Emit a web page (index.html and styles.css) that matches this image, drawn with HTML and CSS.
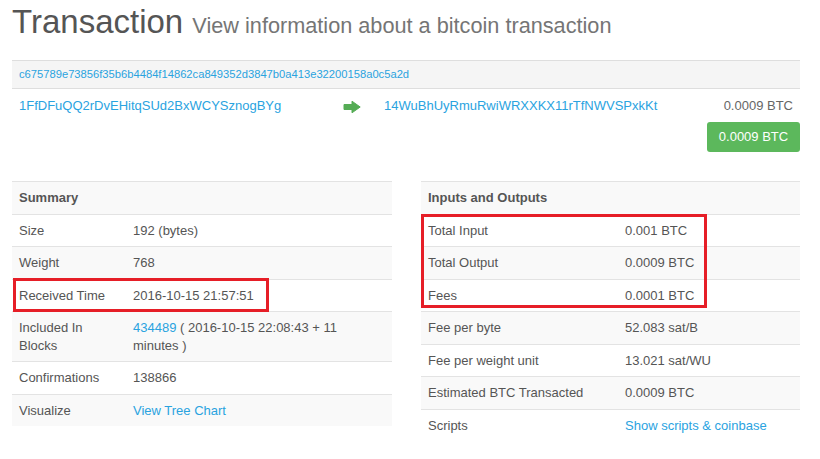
FILE: index.html
```html
<!DOCTYPE html>
<html>
<head>
<meta charset="utf-8">
<link rel="stylesheet" href="styles.css">
</head>
<body>
<div class="page">
  <h1 class="title">Transaction <small class="subtitle">View information about a bitcoin transaction</small></h1>

  <div class="tx-hash"><a href="#">c675789e73856f35b6b4484f14862ca849352d3847b0a413e32200158a0c5a2d</a></div>

  <div class="tx-io">
    <div class="tx-from"><a href="#">1FfDFuQQ2rDvEHitqSUd2BxWCYSznogBYg</a></div>
    <div class="tx-arrow">
      <svg width="18" height="14" viewBox="0 0 18 14"><path d="M1 4.5 H9 V1.2 L17.2 7 L9 12.8 V9.5 H1 Z" fill="#55ac55" stroke="#55ac55" stroke-width="1" stroke-linejoin="round"/></svg>
    </div>
    <div class="tx-to"><a href="#">14WuBhUyRmuRwiWRXXKX11rTfNWVSPxkKt</a></div>
    <div class="tx-amount">0.0009 BTC</div>
  </div>
  <div class="tx-total"><span class="btn-total">0.0009 BTC</span></div>

  <div class="tables">
    <div class="table table-left">
      <div class="row head"><div class="cell">Summary</div></div>
      <div class="row"><div class="cell label">Size</div><div class="cell value">192 (bytes)</div></div>
      <div class="row"><div class="cell label">Weight</div><div class="cell value">768</div></div>
      <div class="row"><div class="cell label">Received Time</div><div class="cell value">2016-10-15 21:57:51</div></div>
      <div class="row"><div class="cell label">Included In Blocks</div><div class="cell value"><a href="#">434489</a> ( 2016-10-15 22:08:43 + 11 minutes )</div></div>
      <div class="row"><div class="cell label">Confirmations</div><div class="cell value">138866</div></div>
      <div class="row"><div class="cell label">Visualize</div><div class="cell value"><a href="#">View Tree Chart</a></div></div>
      <div class="mark mark-left"></div>
    </div>
    <div class="table table-right">
      <div class="row head"><div class="cell">Inputs and Outputs</div></div>
      <div class="row"><div class="cell label">Total Input</div><div class="cell value">0.001 BTC</div></div>
      <div class="row"><div class="cell label">Total Output</div><div class="cell value">0.0009 BTC</div></div>
      <div class="row"><div class="cell label">Fees</div><div class="cell value">0.0001 BTC</div></div>
      <div class="row"><div class="cell label">Fee per byte</div><div class="cell value">52.083 sat/B</div></div>
      <div class="row"><div class="cell label">Fee per weight unit</div><div class="cell value">13.021 sat/WU</div></div>
      <div class="row"><div class="cell label">Estimated BTC Transacted</div><div class="cell value">0.0009 BTC</div></div>
      <div class="row"><div class="cell label">Scripts</div><div class="cell value"><a href="#">Show scripts &amp; coinbase</a></div></div>
      <div class="mark mark-right"></div>
    </div>
  </div>
</div>
</body>
</html>
```

FILE: styles.css
```css
* { box-sizing: border-box; }
html, body { margin: 0; padding: 0; background: #fff; }
body {
  font-family: "Liberation Sans", Arial, Helvetica, sans-serif;
  font-size: 13px;
  color: #555;
}
a { color: #2aa3df; text-decoration: none; }

.page { width: 820px; padding: 0 20px 0 12px; }

.title {
  margin: 4px 0 0;
  height: 36px;
  font-size: 33px;
  font-weight: normal;
  line-height: 36px;
  color: #555;
  white-space: nowrap;
}
.subtitle { font-size: 21.7px; line-height: 1; color: #757575; }

.tx-hash {
  margin-top: 20px;
  height: 29px;
  border-top: 1px solid #dedede;
  border-bottom: 1px solid #dedede;
  background: #f5f5f5;
  padding: 0 7px;
  font-size: 11.2px;
  line-height: 27px;
}

.tx-io {
  display: grid;
  grid-template-columns: 331px 41px 1fr auto;
  align-items: center;
  padding: 8px 7px 0 0;
  line-height: 18px;
}
.tx-from { padding-left: 7px; }
.tx-arrow { display: flex; align-items: center; height: 18px; padding-top: 1px; }
.tx-amount { color: #666; }

.tx-total { display: flex; justify-content: flex-end; margin-top: 7px; }
.btn-total {
  display: block;
  width: 93px;
  height: 30px;
  line-height: 30px;
  text-align: center;
  background: #5cb85c;
  border-radius: 3px;
  color: #fff;
  font-size: 13px;
}

.tables {
  display: grid;
  grid-template-columns: 380px 379px;
  column-gap: 29px;
  margin-top: 29px;
  align-items: start;
}
.table { position: relative; }
.row {
  display: flex;
  border-top: 1px solid #e3e3e3;
}
.row:nth-child(odd) { background: #f9f9f9; }
.cell { padding: 7px 7px; line-height: 17.5px; }
.head .cell { font-weight: bold; color: #555; }
.table-left .label { width: 114px; flex: none; }
.table-right .label { width: 197px; flex: none; }
.value { flex: 1; padding-right: 10px; }

.mark {
  position: absolute;
  border: 3px solid #e61e27;
  pointer-events: none;
}
.mark-left { left: 1px; top: 97px; width: 256px; height: 34px; }
.mark-right { left: 0; top: 33px; width: 286px; height: 94px; }
```
